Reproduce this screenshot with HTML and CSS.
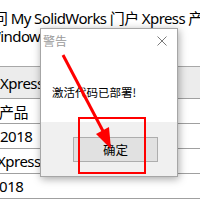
FILE: index.html
```html
<!DOCTYPE html>
<html>
<head>
<meta charset="utf-8">
<link rel="stylesheet" href="styles.css">
</head>
<body>
<div class="page">
  <div class="line line1">问 My SolidWorks 门户 Xpress 产品</div>
  <div class="line line2">Windows</div>
  <div class="table">
    <div class="row head"><span class="c c1">Xpress</span></div>
    <div class="row"><span class="c c2">产品</span></div>
    <div class="row"><span class="c c3">2018</span></div>
    <div class="row"><span class="c c4">Xpress 2018</span></div>
    <div class="row"><span class="c c5">2018</span></div>
  </div>
</div>

<div class="dialog">
  <div class="titlebar">
    <span class="title">警告</span>
    <svg class="close" width="10" height="10" viewBox="0 0 10 10"><path d="M0.5 0.5L9.5 9.5M9.5 0.5L0.5 9.5" stroke="#7a7a7a" stroke-width="1" fill="none"/></svg>
  </div>
  <div class="body"><span class="msg">激活代码已部署!</span></div>
  <div class="footer"><div class="btn">确定</div></div>
</div>

<div class="redbox"></div>
<svg class="arrow" width="200" height="203" viewBox="0 0 200 203">
  <line x1="63" y1="55" x2="104" y2="133" stroke="#ff0000" stroke-width="3"/>
  <polygon points="111,149 96,134 109,127" fill="#ff0000"/>
</svg>
</body>
</html>
```

FILE: styles.css
```css
html, body {
  margin: 0;
  padding: 0;
}
body {
  width: 200px;
  height: 203px;
  overflow: hidden;
  background: #ffffff;
  font-family: "Noto Sans", "Noto Sans CJK SC", sans-serif;
  color: #000;
  position: relative;
}
.page {
  padding-top: 9px;
}
.line {
  font-size: 15px;
  line-height: 18px;
  letter-spacing: -0.6px;
  white-space: nowrap;
}
.line1 {
  margin-left: -7px;
}
.line2 {
  margin-left: -13px;
}
.table {
  margin-top: 21px;
  border-top: 1px solid #a8a8a8;
}
.row {
  height: 24px;
  border-bottom: 1px solid #a0a0a0;
  display: flex;
  align-items: center;
  font-size: 15px;
  letter-spacing: -0.5px;
  white-space: nowrap;
}
.row.head {
  height: 31px;
  background: #ececec;
}
.c1 { margin-left: 0; }
.c2 { margin-left: -1px; }
.c3 { margin-left: 0; }
.c4 { margin-left: -3px; }
.c5 { margin-left: -9px; }

.dialog {
  position: absolute;
  left: 40px;
  top: 28px;
  width: 138px;
  height: 149px;
  box-sizing: border-box;
  border: 1px solid #a6a6a6;
  background: #ffffff;
  box-shadow: 1px 2px 8px rgba(0,0,0,0.35);
  display: flex;
  flex-direction: column;
  font-family: "Noto Sans CJK SC", sans-serif;
}
.titlebar {
  height: 23px;
  display: flex;
  align-items: center;
  justify-content: space-between;
  padding: 0 10px 0 2px;
}
.title {
  font-size: 12px;
  color: #9a9a9a;
}
.close {
  display: block;
}
.body {
  flex: 1;
  padding: 26px 0 0 11px;
  box-sizing: border-box;
}
.msg {
  font-size: 11.5px;
  line-height: 14px;
  white-space: nowrap;
}
.footer {
  height: 54px;
  background: #f0f0f0;
  padding: 15px 0 0 32px;
  box-sizing: border-box;
}
.btn {
  width: 85px;
  height: 25px;
  box-sizing: border-box;
  border: 1px solid #adadad;
  background: #e1e1e1;
  font-size: 12.5px;
  display: flex;
  align-items: center;
  justify-content: center;
}
.redbox {
  position: absolute;
  left: 78px;
  top: 117px;
  width: 68px;
  height: 57px;
  box-sizing: border-box;
  border: 2px solid #ff0000;
}
.arrow {
  position: absolute;
  left: 0;
  top: 0;
}
```
